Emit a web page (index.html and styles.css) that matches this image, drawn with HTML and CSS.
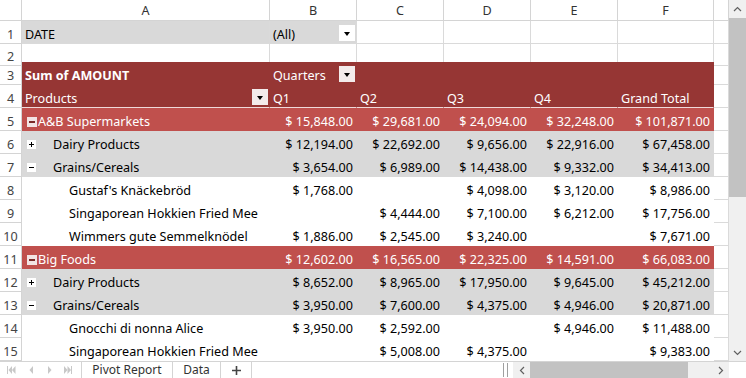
FILE: index.html
```html
<!DOCTYPE html>
<html lang="en">

<head>
	<meta charset="UTF-8">
	<link rel="stylesheet" href="styles.css">
	<title>Pivot Report</title>
</head>

<body>
	<div class="sheet">
		<div class="main">
			<div class="grid">
				<div class="row colhead">
					<div class="hdr"></div>
					<div class="c">A</div>
					<div class="c">B</div>
					<div class="c">C</div>
					<div class="c">D</div>
					<div class="c">E</div>
					<div class="c">F</div>
					<div class="c"></div>
				</div>
				<div class="row r1">
					<div class="hdr">1</div>
					<div class="c filter">DATE</div>
					<div class="c filter">(All)<span class="drop"></span></div>
					<div class="c"></div>
					<div class="c"></div>
					<div class="c"></div>
					<div class="c"></div>
					<div class="c"></div>
				</div>
				<div class="row r2">
					<div class="hdr">2</div>
					<div class="c"></div>
					<div class="c"></div>
					<div class="c"></div>
					<div class="c"></div>
					<div class="c"></div>
					<div class="c"></div>
					<div class="c"></div>
				</div>
				<div class="row pv-head">
					<div class="hdr">3</div>
					<div class="c p bold">Sum of AMOUNT</div>
					<div class="c p">Quarters<span class="drop"></span></div>
					<div class="c p"></div>
					<div class="c p"></div>
					<div class="c p"></div>
					<div class="c p"></div>
					<div class="c"></div>
				</div>
				<div class="row pv-head last">
					<div class="hdr">4</div>
					<div class="c p">Products<span class="drop"></span></div>
					<div class="c p">Q1</div>
					<div class="c p">Q2</div>
					<div class="c p">Q3</div>
					<div class="c p">Q4</div>
					<div class="c p">Grand Total</div>
					<div class="c"></div>
				</div>
				<div class="row pv-group">
					<div class="hdr">5</div>
					<div class="c p lvl0"><span class="tog minus"></span>A&amp;B Supermarkets</div>
					<div class="c p num">$ 15,848.00</div>
					<div class="c p num">$ 29,681.00</div>
					<div class="c p num">$ 24,094.00</div>
					<div class="c p num">$ 32,248.00</div>
					<div class="c p num">$ 101,871.00</div>
					<div class="c"></div>
				</div>
				<div class="row pv-sub">
					<div class="hdr">6</div>
					<div class="c p lvl1"><span class="tog plus"></span>Dairy Products</div>
					<div class="c p num">$ 12,194.00</div>
					<div class="c p num">$ 22,692.00</div>
					<div class="c p num">$ 9,656.00</div>
					<div class="c p num">$ 22,916.00</div>
					<div class="c p num">$ 67,458.00</div>
					<div class="c"></div>
				</div>
				<div class="row pv-sub">
					<div class="hdr">7</div>
					<div class="c p lvl1"><span class="tog minus"></span>Grains/Cereals</div>
					<div class="c p num">$ 3,654.00</div>
					<div class="c p num">$ 6,989.00</div>
					<div class="c p num">$ 14,438.00</div>
					<div class="c p num">$ 9,332.00</div>
					<div class="c p num">$ 34,413.00</div>
					<div class="c"></div>
				</div>
				<div class="row pv-item">
					<div class="hdr">8</div>
					<div class="c p lvl2">Gustaf's Knäckebröd</div>
					<div class="c p num">$ 1,768.00</div>
					<div class="c p num"></div>
					<div class="c p num">$ 4,098.00</div>
					<div class="c p num">$ 3,120.00</div>
					<div class="c p num">$ 8,986.00</div>
					<div class="c"></div>
				</div>
				<div class="row pv-item">
					<div class="hdr">9</div>
					<div class="c p lvl2">Singaporean Hokkien Fried Mee</div>
					<div class="c p num"></div>
					<div class="c p num">$ 4,444.00</div>
					<div class="c p num">$ 7,100.00</div>
					<div class="c p num">$ 6,212.00</div>
					<div class="c p num">$ 17,756.00</div>
					<div class="c"></div>
				</div>
				<div class="row pv-item">
					<div class="hdr">10</div>
					<div class="c p lvl2">Wimmers gute Semmelknödel</div>
					<div class="c p num">$ 1,886.00</div>
					<div class="c p num">$ 2,545.00</div>
					<div class="c p num">$ 3,240.00</div>
					<div class="c p num"></div>
					<div class="c p num">$ 7,671.00</div>
					<div class="c"></div>
				</div>
				<div class="row pv-group">
					<div class="hdr">11</div>
					<div class="c p lvl0"><span class="tog minus"></span>Big Foods</div>
					<div class="c p num">$ 12,602.00</div>
					<div class="c p num">$ 16,565.00</div>
					<div class="c p num">$ 22,325.00</div>
					<div class="c p num">$ 14,591.00</div>
					<div class="c p num">$ 66,083.00</div>
					<div class="c"></div>
				</div>
				<div class="row pv-sub">
					<div class="hdr">12</div>
					<div class="c p lvl1"><span class="tog plus"></span>Dairy Products</div>
					<div class="c p num">$ 8,652.00</div>
					<div class="c p num">$ 8,965.00</div>
					<div class="c p num">$ 17,950.00</div>
					<div class="c p num">$ 9,645.00</div>
					<div class="c p num">$ 45,212.00</div>
					<div class="c"></div>
				</div>
				<div class="row pv-sub">
					<div class="hdr">13</div>
					<div class="c p lvl1"><span class="tog minus"></span>Grains/Cereals</div>
					<div class="c p num">$ 3,950.00</div>
					<div class="c p num">$ 7,600.00</div>
					<div class="c p num">$ 4,375.00</div>
					<div class="c p num">$ 4,946.00</div>
					<div class="c p num">$ 20,871.00</div>
					<div class="c"></div>
				</div>
				<div class="row pv-item">
					<div class="hdr">14</div>
					<div class="c p lvl2">Gnocchi di nonna Alice</div>
					<div class="c p num">$ 3,950.00</div>
					<div class="c p num">$ 2,592.00</div>
					<div class="c p num"></div>
					<div class="c p num">$ 4,946.00</div>
					<div class="c p num">$ 11,488.00</div>
					<div class="c"></div>
				</div>
				<div class="row pv-item">
					<div class="hdr">15</div>
					<div class="c p lvl2">Singaporean Hokkien Fried Mee</div>
					<div class="c p num"></div>
					<div class="c p num">$ 5,008.00</div>
					<div class="c p num">$ 4,375.00</div>
					<div class="c p num"></div>
					<div class="c p num">$ 9,383.00</div>
					<div class="c"></div>
				</div>
			</div>
			<div class="vscroll">
				<div class="arrow">
					<svg width="9" height="6" viewBox="0 0 9 6"><path d="M1 5 L4.5 1.5 L8 5" fill="none" stroke="#606060" stroke-width="1.2"/></svg>
				</div>
				<div class="vthumb"></div>
				<div class="vtrack"></div>
				<div class="arrow">
					<svg width="9" height="6" viewBox="0 0 9 6"><path d="M1 1 L4.5 4.5 L8 1" fill="none" stroke="#606060" stroke-width="1.2"/></svg>
				</div>
			</div>
		</div>
		<div class="tabbar">
			<div class="nav">
				<svg width="80" height="16" viewBox="0 0 80 16">
					<g fill="#c8c8c8">
						<rect x="7" y="4" width="1" height="8"/>
						<path d="M12 4 L8.5 8 L12 12Z"/>
						<path d="M15.5 4 L12 8 L15.5 12Z"/>
						<path d="M33 4 L29.5 8 L33 12Z"/>
						<path d="M48 4 L51.5 8 L48 12Z"/>
						<path d="M64 4 L67.5 8 L64 12Z"/>
						<path d="M67.5 4 L71 8 L67.5 12Z"/>
						<rect x="71" y="4" width="1" height="8"/>
					</g>
				</svg>
			</div>
			<div class="tab report">Pivot Report</div>
			<div class="tab data">Data</div>
			<div class="tab add">
				<svg width="9" height="9" viewBox="0 0 9 9"><path d="M4.5 0 V9 M0 4.5 H9" stroke="#444" stroke-width="1.6"/></svg>
			</div>
			<div class="tabspace"></div>
			<div class="splitter"></div>
			<div class="hscroll">
				<div class="harrow">
					<svg width="6" height="9" viewBox="0 0 6 9"><path d="M5 1 L1.5 4.5 L5 8" fill="none" stroke="#606060" stroke-width="1.2"/></svg>
				</div>
				<div class="hthumb"></div>
				<div class="htrack"></div>
				<div class="harrow">
					<svg width="6" height="9" viewBox="0 0 6 9"><path d="M1 1 L4.5 4.5 L1 8" fill="none" stroke="#606060" stroke-width="1.2"/></svg>
				</div>
			</div>
			<div class="corner"></div>
		</div>
	</div>
</body>

</html>
```
FILE: styles.css
```css
body {
	margin: 0;
	background-color: #ffffff;
	font-family: "Noto Sans", Arial, sans-serif;
	font-size: 12.6px;
	color: #000;
}

.sheet {
	width: 746px;
	height: 378px;
	display: flex;
	flex-direction: column;
	overflow: hidden;
}

.main {
	display: flex;
	height: 361px;
}

.grid {
	flex: 1;
	overflow: hidden;
}

.row {
	display: grid;
	grid-template-columns: 22px 248px 87px 87px 87px 87px 96px 1fr;
	height: 23px;
}

.colhead {
	height: 21px;
}

.r1 {
	height: 22px;
}

.r2 {
	height: 19px;
}

.hdr {
	display: flex;
	align-items: center;
	justify-content: center;
	padding-top: 5px;
	color: #444;
	border-right: 1px solid #d4d4d4;
	border-bottom: 1px solid #d4d4d4;
	box-sizing: border-box;
}

.c {
	display: flex;
	align-items: center;
	padding: 5px 3px 0;
	border-right: 1px solid #dadada;
	border-bottom: 1px solid #dadada;
	box-sizing: border-box;
	white-space: nowrap;
	overflow: hidden;
	position: relative;
}

.colhead .hdr,
.colhead .c {
	padding-top: 1px;
}

.colhead .c {
	justify-content: center;
	color: #333;
	border-color: #d4d4d4;
}

.filter {
	background-color: #d9d9d9;
}

.drop {
	position: absolute;
	right: 1px;
	top: 4px;
	width: 16px;
	height: 16px;
	background-color: #f3ebeb;
}

.filter .drop {
	background-color: #ffffff;
}

.drop::after {
	content: "";
	position: absolute;
	left: 5px;
	top: 7px;
	border-left: 3.5px solid transparent;
	border-right: 3.5px solid transparent;
	border-top: 4px solid #000;
}

.p {
	border-color: transparent;
}

.pv-head .p {
	background-color: #963634;
	color: #ffffff;
}

.pv-head.last .p {
	border-bottom: 1px solid #f0dada;
}

.bold {
	font-weight: bold;
}

.pv-group .p {
	background-color: #c0504d;
	color: #ffffff;
}

.pv-sub .p {
	background-color: #d9d9d9;
}

.pv-item .p {
	background-color: #ffffff;
}

.num {
	justify-content: flex-end;
}

.lvl0 {
	padding-left: 5px;
}

.lvl1 {
	padding-left: 5px;
}

.lvl1 .tog {
	margin-right: 17px;
}

.lvl2 {
	padding-left: 47px;
}

.tog {
	width: 9px;
	height: 9px;
	margin-right: 1px;
	position: relative;
	flex-shrink: 0;
}

.pv-group .tog {
	width: 10px;
	height: 10px;
	background-color: #f2e4e4;
}

.pv-sub .tog {
	background-color: #ffffff;
}

.tog::before {
	content: "";
	position: absolute;
	left: 2px;
	right: 2px;
	top: 4px;
	height: 1px;
	background-color: #000;
}

.pv-group .tog::before {
	background-color: #7a2a28;
	top: 4px;
	height: 2px;
}

.plus::after {
	content: "";
	position: absolute;
	top: 2px;
	bottom: 2px;
	left: 4px;
	width: 1px;
	background-color: #000;
}

.vscroll {
	width: 17px;
	background-color: #f0f0f0;
	display: flex;
	flex-direction: column;
}

.arrow {
	height: 17px;
	display: flex;
	align-items: center;
	justify-content: center;
	background-color: #f0f0f0;
}

.vthumb {
	height: 179px;
	margin: 1px 0;
	background-color: #c2c2c2;
}

.vtrack {
	flex: 1;
}

.tabbar {
	display: flex;
	height: 17px;
	border-top: 1px solid #d4d4d4;
	box-sizing: border-box;
	font-size: 12px;
	color: #333;
}

.nav {
	width: 81px;
	border-right: 1px solid #d4d4d4;
	display: flex;
	align-items: center;
}

.tab {
	display: flex;
	align-items: center;
	justify-content: center;
	border-right: 1px solid #d4d4d4;
	box-sizing: border-box;
	line-height: 14px;
}

.tab.report {
	width: 91px;
}

.tab.data {
	width: 48px;
}

.tab.add {
	width: 31px;
}

.tabspace {
	flex: 1;
}

.splitter {
	width: 3px;
	margin: 1px 5px 1px 0;
	border-left: 1px solid #a0a0a0;
	border-right: 1px solid #a0a0a0;
}

.hscroll {
	width: 216px;
	display: flex;
	background-color: #f0f0f0;
}

.harrow {
	width: 17px;
	display: flex;
	align-items: center;
	justify-content: center;
}

.hthumb {
	width: 158px;
	background-color: #c2c2c2;
}

.htrack {
	flex: 1;
}

.corner {
	width: 17px;
	background-color: #ffffff;
}
```
